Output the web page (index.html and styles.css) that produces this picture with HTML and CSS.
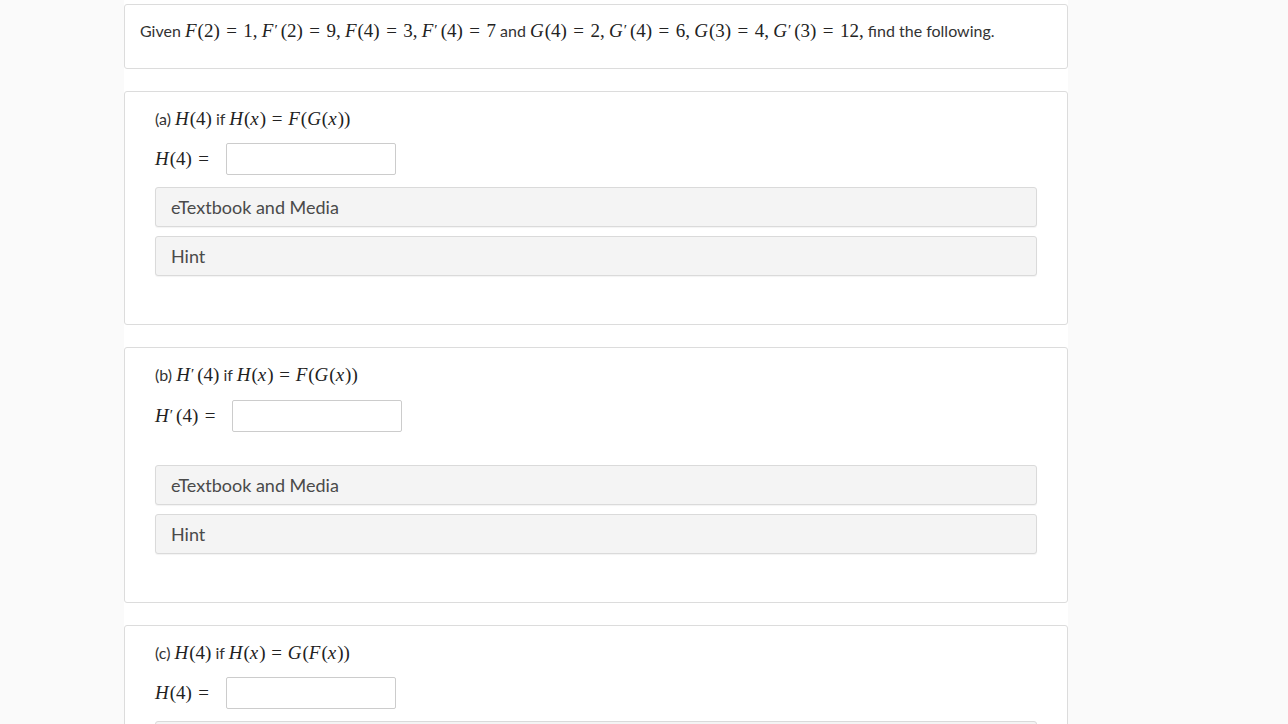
FILE: index.html
```html
<!DOCTYPE html>
<html lang="en">
<head>
    <meta charset="UTF-8">
    <title>Chain Rule Question</title>
    <link rel="stylesheet" href="styles.css">
</head>
<body>
    <div class="column">
        <div class="card intro">
            <p>Given <span class="m"><i>F</i>(2)<span class="rel">=</span>1,<span class="sp"></span><i>F</i><span class="pr">′</span>(2)<span class="rel">=</span>9,<span class="sp"></span><i>F</i>(4)<span class="rel">=</span>3,<span class="sp"></span><i>F</i><span class="pr">′</span>(4)<span class="rel">=</span>7</span> and <span class="m"><i>G</i>(4)<span class="rel">=</span>2,<span class="sp"></span><i>G</i><span class="pr">′</span>(4)<span class="rel">=</span>6,<span class="sp"></span><i>G</i>(3)<span class="rel">=</span>4,<span class="sp"></span><i>G</i><span class="pr">′</span>(3)<span class="rel">=</span>12,</span> find the following.</p>
        </div>

        <div class="card part">
            <div class="part-title">(a) <span class="m"><i>H</i>(4)</span> if <span class="m"><i>H</i>(<i>x</i>)<span class="rel">=</span><i>F</i>(<i>G</i>(<i>x</i>))</span></div>
            <div class="answer-row">
                <span class="m"><i>H</i>(4)<span class="rel">=</span></span>
                <input type="text" class="answer">
            </div>
            <div class="resource">eTextbook and Media</div>
            <div class="resource">Hint</div>
        </div>

        <div class="card part">
            <div class="part-title">(b) <span class="m"><i>H</i><span class="pr">′</span>(4)</span> if <span class="m"><i>H</i>(<i>x</i>)<span class="rel">=</span><i>F</i>(<i>G</i>(<i>x</i>))</span></div>
            <div class="answer-row">
                <span class="m"><i>H</i><span class="pr">′</span>(4)<span class="rel">=</span></span>
                <input type="text" class="answer">
            </div>
            <div class="resource spaced">eTextbook and Media</div>
            <div class="resource">Hint</div>
        </div>

        <div class="card part">
            <div class="part-title">(c) <span class="m"><i>H</i>(4)</span> if <span class="m"><i>H</i>(<i>x</i>)<span class="rel">=</span><i>G</i>(<i>F</i>(<i>x</i>))</span></div>
            <div class="answer-row">
                <span class="m"><i>H</i>(4)<span class="rel">=</span></span>
                <input type="text" class="answer">
            </div>
            <div class="resource">eTextbook and Media</div>
            <div class="resource">Hint</div>
        </div>
    </div>
</body>
</html>
```

FILE: styles.css
```css
body {
    margin: 0;
    background-color: #fafafa;
    font-family: 'Lato', 'Liberation Sans', sans-serif;
    color: #333;
}
.column {
    width: 944px;
    margin-left: 124px;
    padding-top: 4px;
    background-color: white;
    height: 720px;
    overflow: hidden;
}
.card {
    border: 1px solid #dcdcdc;
    border-radius: 3px;
    background-color: white;
    margin-bottom: 22px;
}
.intro {
    padding: 15px 15px 25px;
}
.intro p {
    margin: 0;
    font-size: 16px;
    line-height: 22px;
    white-space: nowrap;
}
.m {
    font-family: 'Liberation Serif', 'DejaVu Serif', serif;
    font-size: 19px;
    color: #222;
}
.m i {
    font-style: italic;
    margin-right: 1px;
}
.rel {
    margin: 0 0.34em;
}
.sp {
    display: inline-block;
    width: 0.22em;
}
.pr {
    font-size: 0.8em;
    margin-right: 3px;
    position: relative;
    top: -0.15em;
}
.part {
    padding: 16px 30px 48px;
}
.part-title {
    font-size: 16px;
    line-height: 22px;
}
.part-title .rel {
    margin: 0 0.3em;
}
.answer-row {
    display: flex;
    align-items: center;
    gap: 10px;
    margin-top: 13px;
}
.answer {
    width: 170px;
    height: 32px;
    box-sizing: border-box;
    border: 1px solid #ccc;
    border-radius: 2px;
    margin: 0;
}
.resource {
    height: 40px;
    box-sizing: border-box;
    background-color: #f4f4f4;
    border: 1px solid #dadada;
    border-radius: 3px;
    box-shadow: 0 1px 1px rgba(0,0,0,0.05);
    padding: 0 15px;
    display: flex;
    align-items: center;
    font-size: 18px;
    color: #4a4a4a;
    margin-top: 9px;
}
.answer-row + .resource {
    margin-top: 12px;
}
.answer-row + .resource.spaced {
    margin-top: 33px;
}
```
